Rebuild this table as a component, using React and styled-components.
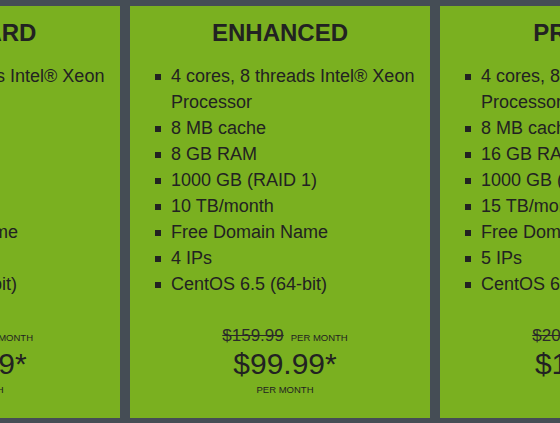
import React from 'react';
import styled, { createGlobalStyle } from 'styled-components';

const GlobalStyle = createGlobalStyle`
    html, body {
        margin: 0;
        padding: 0;
        background-color: #454d55;
        overflow: hidden;
    }
`

const plans = [
    {
        name: 'STANDARD',
        features: ['2 cores, 4 threads Intel® Xeon Processor', '4 MB cache', '4 GB RAM', '500 GB (RAID 1)', '5 TB/month', 'Free Domain Name', '2 IPs', 'CentOS 6.5 (64-bit)'],
        oldPrice: '$79.99',
        price: '$49.99*'
    },
    {
        name: 'ENHANCED',
        features: ['4 cores, 8 threads Intel® Xeon Processor', '8 MB cache', '8 GB RAM', '1000 GB (RAID 1)', '10 TB/month', 'Free Domain Name', '4 IPs', 'CentOS 6.5 (64-bit)'],
        oldPrice: '$159.99',
        price: '$99.99*'
    },
    {
        name: 'PREMIUM',
        features: ['4 cores, 8 threads Intel® Xeon Processor', '8 MB cache', '16 GB RAM', '1000 GB (RAID 1)', '15 TB/month', 'Free Domain Name', '5 IPs', 'CentOS 6.5 (64-bit)'],
        oldPrice: '$209.99',
        price: '$149.99*'
    }
]

const Wrapper = styled.div`
    display: flex;
    flex-direction: row;
    gap: 10px;
    padding-top: 6px;
    margin-left: -180px;
    width: 920px;
    font-family: 'Liberation Sans', Arial, sans-serif;
    color: #222;
`

const Card = styled.div`
    flex: 0 0 300px;
    height: 412px;
    box-sizing: border-box;
    background-color: #7ab020;
    padding-top: 13px;
    display: flex;
    flex-direction: column;
`

const Title = styled.h2`
    margin: 0;
    font-size: 24px;
    line-height: 28px;
    font-weight: 700;
    text-align: center;
`

const Features = styled.ul`
    list-style: none;
    margin: 16px 10px 0 41px;
    padding: 0;
`

const Feature = styled.li`
    position: relative;
    font-size: 18px;
    line-height: 26px;

    &::before {
        content: '';
        position: absolute;
        left: -16px;
        top: 11px;
        width: 6px;
        height: 6px;
        background-color: #222;
    }
`

const Pricing = styled.div`
    margin-top: 28px;
    padding-left: 10px;
    display: flex;
    flex-direction: column;
    align-items: center;
`

const OldRow = styled.div`
    display: flex;
    align-items: baseline;
    gap: 7px;
    line-height: 22px;
`

const OldPrice = styled.span`
    font-size: 17px;
    text-decoration: line-through;
    color: #2a2a2a;
`

const Small = styled.span`
    font-size: 9.5px;
    line-height: 12px;
    text-transform: uppercase;
`

const Price = styled.div`
    font-size: 30px;
    line-height: 34px;
`

const PerMonth = styled(Small)`
    margin-top: 3px;
`

export default function App() {
    return (
        <>
            <GlobalStyle />
            <Wrapper>
                {plans.map((plan) => (
                    <Card key={plan.name}>
                        <Title>{plan.name}</Title>
                        <Features>
                            {plan.features.map((f) => (
                                <Feature key={f}>{f}</Feature>
                            ))}
                        </Features>
                        <Pricing>
                            <OldRow>
                                <OldPrice>{plan.oldPrice}</OldPrice>
                                <Small>per month</Small>
                            </OldRow>
                            <Price>{plan.price}</Price>
                            <PerMonth>per month</PerMonth>
                        </Pricing>
                    </Card>
                ))}
            </Wrapper>
        </>
    )
}
